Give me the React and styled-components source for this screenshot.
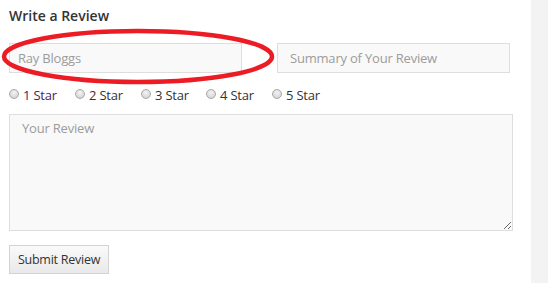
import React from "react";
import styled, { createGlobalStyle } from "styled-components";

const Global = createGlobalStyle`
  html, body { margin: 0; padding: 0; background: #ffffff; }
  body { font-family: "Open Sans", "Liberation Sans", sans-serif; }
  * { box-sizing: border-box; }
`;

const Page = styled.div`
  position: relative;
  display: flex;
  width: 548px;
  height: 283px;
  overflow: hidden;
`;

const Main = styled.div`
  width: 531px;
  padding: 6px 0 0 9px;
  display: flex;
  flex-direction: column;
  align-items: flex-start;
`;

const Sidebar = styled.div`
  flex: 1;
  background: #f3f3f3;
`;

const Heading = styled.h3`
  margin: 0;
  font-size: 14px;
  line-height: 20px;
  font-weight: 600;
  color: #333333;
`;

const FieldRow = styled.div`
  display: flex;
  gap: 35px;
  margin-top: 17px;
`;

const TextInput = styled.input`
  width: 233px;
  height: 30px;
  padding: 0 0 0 ${(p) => p.$pad}px;
  border: 1px solid #dedede;
  background: #f9f9f9;
  font-family: "Open Sans", "Liberation Sans", sans-serif;
  font-size: 13px;
  letter-spacing: -0.2px;
  color: #999999;
  outline: none;
  &::placeholder { color: #9c9c9c; opacity: 1; }
`;

const RatingRow = styled.div`
  display: flex;
  margin-top: 13px;
`;

const RatingLabel = styled.label`
  width: ${(p) => p.$w}px;
  display: flex;
  align-items: flex-start;
  gap: 4px;
  font-size: 13px;
  line-height: 18px;
  letter-spacing: -0.2px;
  color: ${(p) => p.$color || "#333333"};
`;

const Radio = styled.input.attrs({ type: "radio" })`
  appearance: none;
  -webkit-appearance: none;
  margin: 3px 0 0 0;
  width: 10px;
  height: 10px;
  border-radius: 50%;
  border: 1px solid #a9a9a9;
  background: radial-gradient(circle at 50% 35%, #f4f4f4 0%, #dcdcdc 60%, #c8c8c8 100%);
  flex: none;
`;

const ReviewArea = styled.textarea`
  margin-top: 10px;
  width: 504px;
  height: 117px;
  padding: 4px 12px;
  border: 1px solid #dedede;
  background: #f9f9f9;
  font-family: "Open Sans", "Liberation Sans", sans-serif;
  font-size: 13px;
  line-height: 18px;
  letter-spacing: -0.2px;
  color: #555555;
  outline: none;
  resize: both;
  &::placeholder { color: #9c9c9c; opacity: 1; }
`;

const SubmitButton = styled.button`
  margin-top: 14px;
  width: 100px;
  height: 29px;
  padding: 0;
  border: 1px solid #d3d3d3;
  background: linear-gradient(to bottom, #fafafa 0%, #e9e9e9 100%);
  font-family: "Open Sans", "Liberation Sans", sans-serif;
  font-size: 12.5px;
  letter-spacing: -0.25px;
  color: #333333;
  cursor: pointer;
`;

const Annotation = styled.svg`
  position: absolute;
  left: 0;
  top: 27px;
  pointer-events: none;
`;

const stars = [
  { n: 1, w: 66, color: "#4e2157" },
  { n: 2, w: 66 },
  { n: 3, w: 65 },
  { n: 4, w: 66 },
  { n: 5, w: 66 },
];

export default function App() {
  return (
    <>
      <Global />
      <Page>
        <Main>
          <Heading>Write a Review</Heading>
          <FieldRow>
            <TextInput $pad={8} placeholder="Ray Bloggs" />
            <TextInput $pad={12} placeholder="Summary of Your Review" />
          </FieldRow>
          <RatingRow>
            {stars.map((s) => (
              <RatingLabel key={s.n} $w={s.w} $color={s.color}>
                <Radio name="rating" value={s.n} />
                {s.n} Star
              </RatingLabel>
            ))}
          </RatingRow>
          <ReviewArea placeholder="Your Review" />
          <SubmitButton>Submit Review</SubmitButton>
        </Main>
        <Sidebar />
        <Annotation width="280" height="62" viewBox="0 0 280 62">
          <ellipse
            cx="138"
            cy="29.5"
            rx="134"
            ry="25.5"
            fill="none"
            stroke="#ec1c24"
            strokeWidth="4.5"
          />
        </Annotation>
      </Page>
    </>
  );
}
